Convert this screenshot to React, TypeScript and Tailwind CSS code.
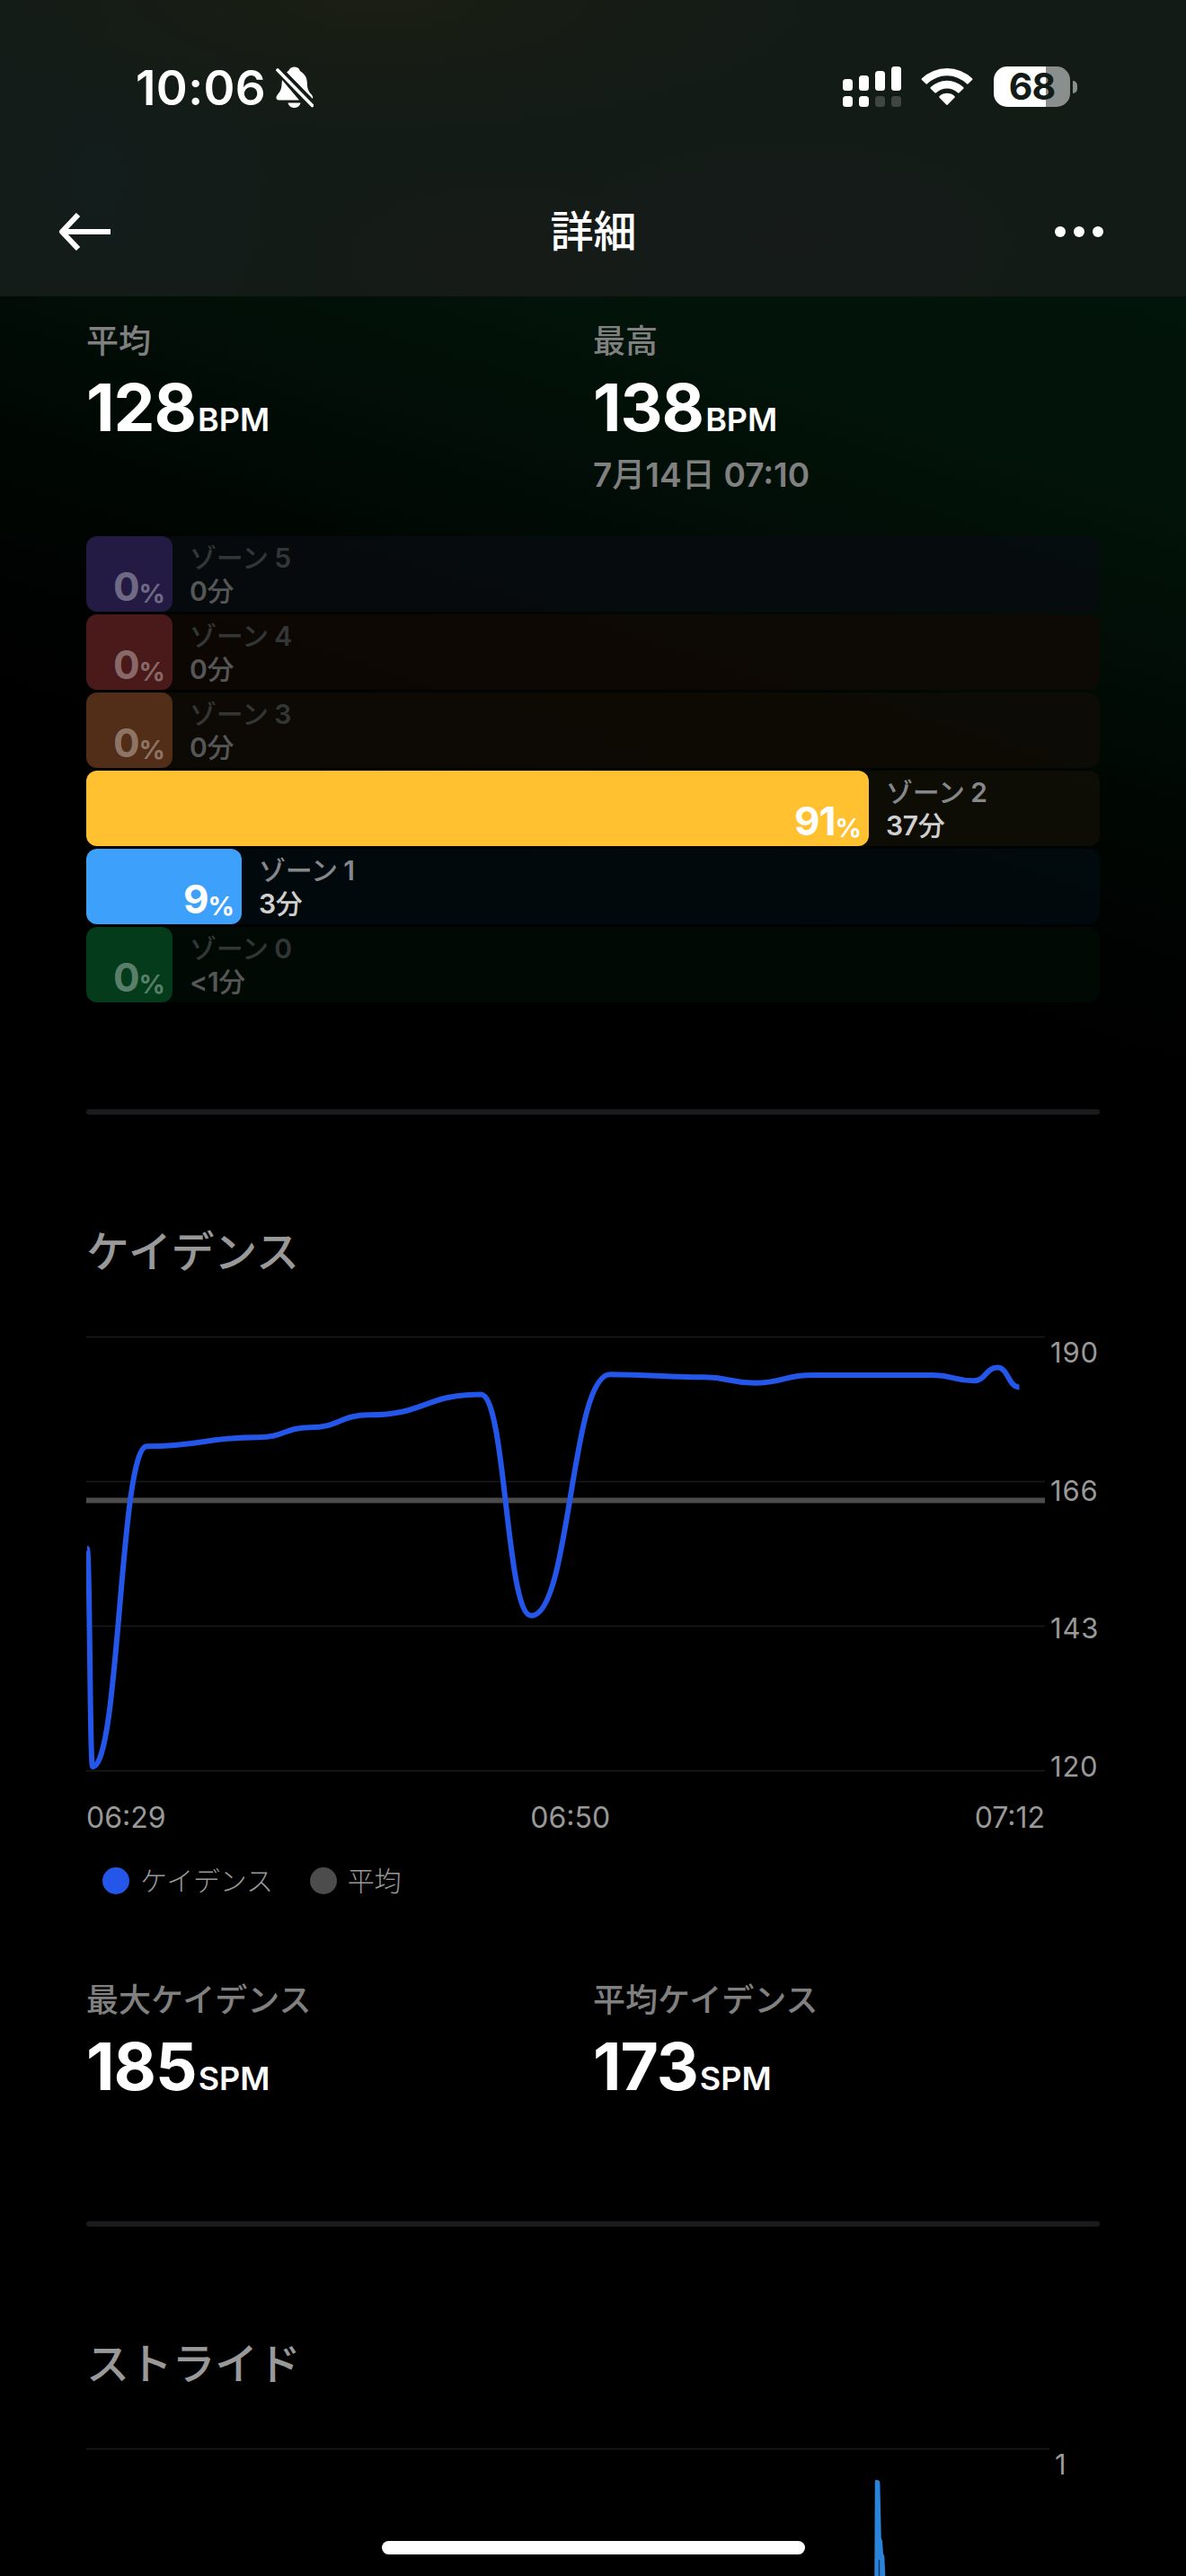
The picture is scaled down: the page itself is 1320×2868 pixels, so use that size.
import type { ReactNode } from "react";

type Zone = {
  name: string;
  percent: number;
  time: string;
  fill: string;
  track: string;
  width: number;
  dim: boolean;
};

const zones: Zone[] = [
  { name: "ゾーン 5", percent: 0, time: "0分", fill: "bg-[#241b44]", track: "bg-[#080c12]/75", width: 96, dim: true },
  { name: "ゾーン 4", percent: 0, time: "0分", fill: "bg-[#4a1a1a]", track: "bg-[#120a06]/75", width: 96, dim: true },
  { name: "ゾーン 3", percent: 0, time: "0分", fill: "bg-[#522d17]", track: "bg-[#110c05]/75", width: 96, dim: true },
  { name: "ゾーン 2", percent: 91, time: "37分", fill: "bg-[#ffc130]", track: "bg-[#121007]/75", width: 871, dim: false },
  { name: "ゾーン 1", percent: 9, time: "3分", fill: "bg-[#3da1fb]", track: "bg-[#020c12]/75", width: 173, dim: false },
  { name: "ゾーン 0", percent: 0, time: "<1分", fill: "bg-[#033b1b]", track: "bg-[#000c05]/75", width: 96, dim: true },
];

const cadence: [number, number][] = [
  [97, 1724],
  [103, 1967],
  [163.5, 1610.2],
  [288, 1600.2],
  [345, 1589.3],
  [411, 1575.3],
  [535, 1552.4],
  [591.3, 1798.8],
  [679, 1530.2],
  [783, 1533.3],
  [840, 1539.7],
  [904, 1531],
  [1038, 1531],
  [1084, 1537.3],
  [1110, 1522.6],
  [1134.5, 1544.4],
];

function smoothPath(points: [number, number][]) {
  return points
    .map(([x, y], i) => {
      if (i === 0) return `M${x} ${y}`;
      const [px, py] = points[i - 1];
      const mid = (px + x) / 2;
      return `C${mid} ${py} ${mid} ${y} ${x} ${y}`;
    })
    .join(" ");
}

/** Sets digits and Latin signs a step bolder than the Japanese glyphs around them. */
function Mixed({ text }: { text: string }) {
  return (
    <span className="font-medium">
      {text.split(/([\d:<]+)/).map((part, i) =>
        i % 2 === 1 ? (
          <span key={i} className="font-semibold">
            {part}
          </span>
        ) : (
          part
        ),
      )}
    </span>
  );
}

function StatusBar() {
  return (
    <div className="flex h-[45px] items-center justify-between pl-[151px] pr-[121px]">
      <div className="flex items-center">
        <span className="w-[156px] pt-[4px] text-[53px] font-semibold leading-[45px] tracking-[0.4px]">10:06</span>
        <svg className="h-[46px] w-[42px]" viewBox="0 0 42 46" fill="none">
          <path
            fill="#fff"
            d="M12 6.5C14 5 14.600 4.700 15.200 3C16 1.200 18.500.4 20.500.4C23 .4 25.200 1.200 26 3C26.600 4.800 27.500 5.400 29 6.600C33 9.800 34.600 13 34.800 18C35 25 36.300 27.500 39 30.500C41 32.500 41.600 34 41 36Z"
          />
          <path fill="#fff" d="M7 15L26 37.500H3.500C.5 37.500-.5 34.500 1.500 32C4 28.500 6.200 26.500 6.500 20Z" />
          <path fill="#fff" d="M13.500 40.500H27.500C26.800 43.800 24 46 20.500 46C17 46 14.200 43.800 13.500 40.500Z" />
          <path d="M4 1L43 42" stroke="#151c17" strokeWidth="4" />
          <path d="M2 4L40.500 43.500" stroke="#fff" strokeWidth="3.600" strokeLinecap="round" />
        </svg>
      </div>
      <div className="flex items-center">
        <svg className="h-[45px] w-[65px]" viewBox="0 0 65 45" fill="#fff">
          <rect x="0" y="14" width="11" height="13" rx="3.500" />
          <rect x="18" y="10" width="11" height="17" rx="3.500" />
          <rect x="36" y="5" width="11" height="22" rx="3.500" />
          <rect x="54" y="0" width="11" height="27" rx="3.500" />
          <rect x="0" y="33" width="11" height="12" rx="3.500" />
          <rect x="18" y="33" width="11" height="12" rx="3.500" />
          <rect x="36" y="33" width="11" height="12" rx="3.500" fill="#404643" />
          <rect x="54" y="33" width="11" height="12" rx="3.500" fill="#404643" />
        </svg>
        <svg className="ml-[22px] h-[43px] w-[58px]" viewBox="0 0 58 43" fill="#fff">
          <path d="M1 12.200A40.500 40.500 0 0 1 57 12.200Q57.800 13.200 57 14L52.600 18.300Q51.800 19 51 18.300A31.500 31.500 0 0 0 7 18.300Q6.200 19 5.400 18.300L1 14Q.2 13.200 1 12.200Z" />
          <path d="M10.800 22A26.500 26.500 0 0 1 47.200 22Q48 23 47.200 23.800L42.600 28.300Q41.800 29 41 28.300A17.500 17.500 0 0 0 17 28.300Q16.200 29 15.400 28.300L10.800 23.800Q10 23 10.800 22Z" />
          <path d="M20.600 32A12.300 12.300 0 0 1 37.400 32Q38.200 33 37.400 33.800L29.800 41.600Q29 42.400 28.200 41.600L20.600 33.800Q19.800 33 20.600 32Z" />
        </svg>
        <div className="ml-[23px] flex items-center gap-[3px]">
          <div className="flex h-[45px] w-[85px] items-center justify-center rounded-[15px] bg-linear-to-r from-white from-[68%] to-[#8a8e8c] to-[68%]">
            <span className="text-[41px] font-bold leading-[45px] tracking-[-1px] text-[#131b17]">68</span>
          </div>
          <div className="h-[14px] w-[5px] rounded-r-[5px] bg-[#8a8e8c]" />
        </div>
      </div>
    </div>
  );
}

function Header() {
  return (
    <header className="h-[330px] shrink-0 bg-[#131b17] bg-[radial-gradient(ellipse_500px_150px_at_420px_0px,#1a1e13_0%,transparent_100%),radial-gradient(ellipse_200px_260px_at_110px_200px,#131d1b_0%,transparent_100%),radial-gradient(ellipse_240px_120px_at_560px_290px,#171b17_0%,transparent_100%),radial-gradient(ellipse_260px_120px_at_880px_270px,#161b1a_0%,transparent_100%)] pt-[74px]">
      <StatusBar />
      <nav className="mt-[109px] flex h-[60px] items-center justify-between pl-[65px] pr-[92px]">
        <svg className="h-[42px] w-[58px]" viewBox="0 0 58 42" fill="none" stroke="#fff" strokeWidth="6">
          <path d="M58 21H5" />
          <path d="M22 2L4 21L22 40" strokeLinejoin="round" />
        </svg>
        <h1 className="pl-[24px] text-[48px] font-medium leading-[60px]">詳細</h1>
        <div className="flex gap-[9px] pb-[1px]">
          <span className="size-[12px] rounded-full bg-white" />
          <span className="size-[12px] rounded-full bg-white" />
          <span className="size-[12px] rounded-full bg-white" />
        </div>
      </nav>
    </header>
  );
}

function Stat({ label, value, unit, note }: { label: string; value: string; unit: string; note?: string }) {
  return (
    <div>
      <div className="text-[36px] font-medium leading-[44px] text-[#808080]">{label}</div>
      <div className="mt-4 flex h-[72px] items-baseline font-semibold leading-[72px]">
        <span className="text-[73px] font-bold tracking-[-1px]">{value}</span>
        <span className="ml-[2px] text-[36px] leading-[36px]">{unit}</span>
      </div>
      {note && (
        <div className="mt-[17px] text-[37px] leading-[44px] text-[#808080]">
          <Mixed text={note} />
        </div>
      )}
    </div>
  );
}

function ZoneRow({ zone }: { zone: Zone }) {
  return (
    <div className={`flex h-[84px] rounded-[12px] ${zone.track}`}>
      <div
        className={`flex shrink-0 items-baseline justify-end rounded-[12px] pr-[9px] pt-[28px] font-bold leading-[56px] ${zone.fill} ${
          zone.dim ? "text-white/35" : "text-white"
        }`}
        style={{ width: zone.width }}
      >
        <span className="text-[44px] tracking-[-1px]">{zone.percent}</span>
        <span className="relative top-[2px] text-[29px] tracking-[-1px]">%</span>
      </div>
      <div className="pl-[19px] pt-[6px] text-[30px] leading-[37px] tracking-[-0.3px] [word-spacing:-1px]">
        <div className={zone.dim ? "text-[#333636]" : "text-[#85878a]"}>
          <Mixed text={zone.name} />
        </div>
        <div className={zone.dim ? "text-[#555656]" : "text-[#d0d0d0]"}>
          <Mixed text={zone.time} />
        </div>
      </div>
    </div>
  );
}

function Divider() {
  return <hr className="h-[6px] rounded-full border-0 bg-[#1b1b1d]" />;
}

function Heading({ children }: { children: ReactNode }) {
  return (
    <h2 className="mt-[123px] text-[48px] font-medium leading-[60px] tracking-[-0.3px] text-[#999999]">{children}</h2>
  );
}

function LegendItem({ color, label }: { color: string; label: string }) {
  return (
    <div className="flex items-center gap-[12px]">
      <span className={`size-[30px] rounded-full ${color}`} />
      <span className="text-[30px] font-light leading-[30px] tracking-[-0.2px] text-[#999999]">{label}</span>
    </div>
  );
}

function CadenceChart() {
  return (
    <div>
      <div className="mt-[56px] flex h-[500px]">
        <svg className="h-[500px] w-[1067px] shrink-0" viewBox="96 1480 1067 500" fill="none">
          {[1488.5, 1649.5, 1810.5, 1971.5].map((y) => (
            <path key={y} d={`M96 ${y}H1163`} stroke="#1a1a1a" strokeWidth="1.400" />
          ))}
          <path d="M96 1670.500H1163" stroke="#4c4c4c" strokeWidth="6" />
          <path d={smoothPath(cadence)} stroke="#2456ea" strokeWidth="6" />
        </svg>
        <div className="flex h-[503px] flex-col justify-between pl-[6px] pt-[10px] text-[31px] leading-[32px] tracking-[0.8px] text-[#999999]">
          <span>190</span>
          <span>166</span>
          <span>143</span>
          <span>120</span>
        </div>
      </div>
      <div className="mt-[28px] flex h-[32px] w-[1067px] justify-between text-[32px] leading-[32px] text-[#999999]">
        <span>06:29</span>
        <span>06:50</span>
        <span>07:12</span>
      </div>
      <div className="mt-[39px] flex gap-[41px] pl-[18px]">
        <LegendItem color="bg-[#2456ea]" label="ケイデンス" />
        <LegendItem color="bg-[#4c4c4c]" label="平均" />
      </div>
    </div>
  );
}

function StrideChart() {
  return (
    <div className="mt-[56px] flex h-[150px]">
      <svg className="h-[150px] w-[1072px] shrink-0" viewBox="96 2718 1072 150" fill="none">
        <path d="M96 2726.500H1168" stroke="#1a1a1a" strokeWidth="1.400" />
        <path
          d="M973.300 2868L973.800 2762Q974 2761 975 2761L978 2761.600Q979.300 2762 979.400 2765L980.800 2826L982 2829L983 2843L984.300 2846L985.300 2868Z"
          fill="#2a84d9"
        />
        <path d="M978.500 2850V2868" stroke="#10365c" strokeWidth="1.500" />
      </svg>
      <span className="pl-[6px] pt-[10px] text-[31px] leading-[32px] text-[#999999]">1</span>
    </div>
  );
}

export default function App() {
  return (
    <div
      lang="ja"
      className="relative flex h-[2868px] w-[1320px] flex-col overflow-hidden bg-black bg-[linear-gradient(198deg,#02150a_310px,#021309_540px,#010c06_740px,#000502_920px,#000000_1130px)] font-['Inter','Noto_Sans_CJK_JP',sans-serif] text-white"
    >
      <Header />
      <main className="px-[96px] pt-[28px]">
        <section>
          <div className="grid grid-cols-2">
            <Stat label="平均" value="128" unit="BPM" />
            <Stat label="最高" value="138" unit="BPM" note="7月14日 07:10" />
          </div>
          <div className="mb-[119px] mt-[46px] flex flex-col gap-[3px]">
            {zones.map((zone) => (
              <ZoneRow key={zone.name} zone={zone} />
            ))}
          </div>
        </section>
        <Divider />
        <section>
          <Heading>ケイデンス</Heading>
          <CadenceChart />
          <div className="mb-[136px] mt-[96px] grid grid-cols-2">
            <Stat label="最大ケイデンス" value="185" unit="SPM" />
            <Stat label="平均ケイデンス" value="173" unit="SPM" />
          </div>
        </section>
        <Divider />
        <section>
          <Heading>ストライド</Heading>
          <StrideChart />
        </section>
      </main>
      <div className="absolute bottom-[24px] left-[425px] h-[15px] w-[471px] rounded-full bg-white" />
    </div>
  );
}
